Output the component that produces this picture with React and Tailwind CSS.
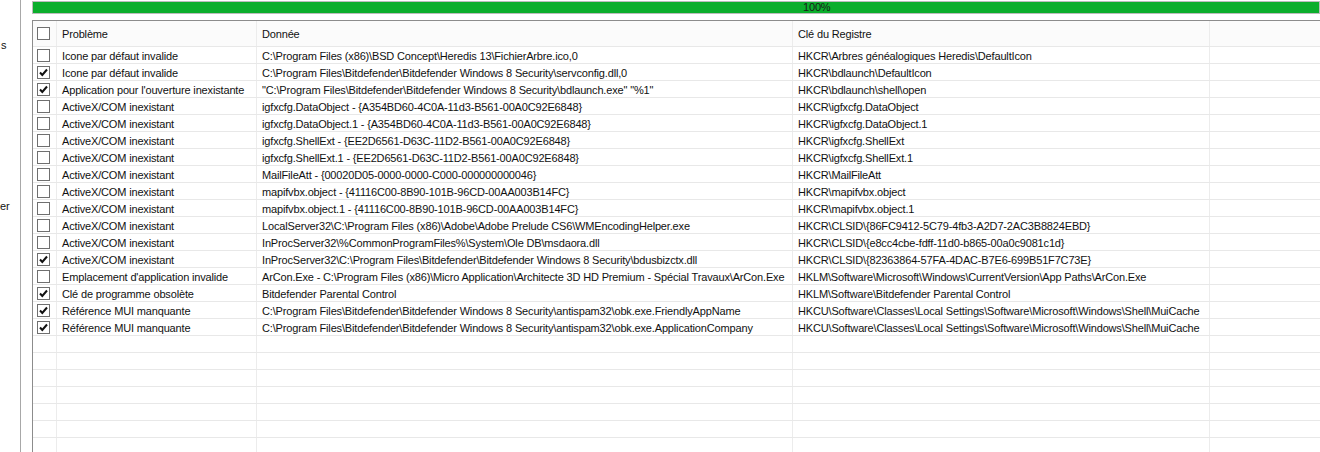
import React from "react";

const rows = [
  [false, "Icone par défaut invalide", "C:\\Program Files (x86)\\BSD Concept\\Heredis 13\\FichierArbre.ico,0", "HKCR\\Arbres généalogiques Heredis\\DefaultIcon"],
  [true, "Icone par défaut invalide", "C:\\Program Files\\Bitdefender\\Bitdefender Windows 8 Security\\servconfig.dll,0", "HKCR\\bdlaunch\\DefaultIcon"],
  [true, "Application pour l'ouverture inexistante", "\"C:\\Program Files\\Bitdefender\\Bitdefender Windows 8 Security\\bdlaunch.exe\" \"%1\"", "HKCR\\bdlaunch\\shell\\open"],
  [false, "ActiveX/COM inexistant", "igfxcfg.DataObject - {A354BD60-4C0A-11d3-B561-00A0C92E6848}", "HKCR\\igfxcfg.DataObject"],
  [false, "ActiveX/COM inexistant", "igfxcfg.DataObject.1 - {A354BD60-4C0A-11d3-B561-00A0C92E6848}", "HKCR\\igfxcfg.DataObject.1"],
  [false, "ActiveX/COM inexistant", "igfxcfg.ShellExt - {EE2D6561-D63C-11D2-B561-00A0C92E6848}", "HKCR\\igfxcfg.ShellExt"],
  [false, "ActiveX/COM inexistant", "igfxcfg.ShellExt.1 - {EE2D6561-D63C-11D2-B561-00A0C92E6848}", "HKCR\\igfxcfg.ShellExt.1"],
  [false, "ActiveX/COM inexistant", "MailFileAtt - {00020D05-0000-0000-C000-000000000046}", "HKCR\\MailFileAtt"],
  [false, "ActiveX/COM inexistant", "mapifvbx.object - {41116C00-8B90-101B-96CD-00AA003B14FC}", "HKCR\\mapifvbx.object"],
  [false, "ActiveX/COM inexistant", "mapifvbx.object.1 - {41116C00-8B90-101B-96CD-00AA003B14FC}", "HKCR\\mapifvbx.object.1"],
  [false, "ActiveX/COM inexistant", "LocalServer32\\C:\\Program Files (x86)\\Adobe\\Adobe Prelude CS6\\WMEncodingHelper.exe", "HKCR\\CLSID\\{86FC9412-5C79-4fb3-A2D7-2AC3B8824EBD}"],
  [false, "ActiveX/COM inexistant", "InProcServer32\\%CommonProgramFiles%\\System\\Ole DB\\msdaora.dll", "HKCR\\CLSID\\{e8cc4cbe-fdff-11d0-b865-00a0c9081c1d}"],
  [true, "ActiveX/COM inexistant", "InProcServer32\\C:\\Program Files\\Bitdefender\\Bitdefender Windows 8 Security\\bdusbizctx.dll", "HKCR\\CLSID\\{82363864-57FA-4DAC-B7E6-699B51F7C73E}"],
  [false, "Emplacement d'application invalide", "ArCon.Exe - C:\\Program Files (x86)\\Micro Application\\Architecte 3D HD Premium - Spécial Travaux\\ArCon.Exe", "HKLM\\Software\\Microsoft\\Windows\\CurrentVersion\\App Paths\\ArCon.Exe"],
  [true, "Clé de programme obsolète", "Bitdefender Parental Control", "HKLM\\Software\\Bitdefender Parental Control"],
  [true, "Référence MUI manquante", "C:\\Program Files\\Bitdefender\\Bitdefender Windows 8 Security\\antispam32\\obk.exe.FriendlyAppName", "HKCU\\Software\\Classes\\Local Settings\\Software\\Microsoft\\Windows\\Shell\\MuiCache"],
  [true, "Référence MUI manquante", "C:\\Program Files\\Bitdefender\\Bitdefender Windows 8 Security\\antispam32\\obk.exe.ApplicationCompany", "HKCU\\Software\\Classes\\Local Settings\\Software\\Microsoft\\Windows\\Shell\\MuiCache"],
];

function Check({ checked }) {
  return (
    <div className="ml-[4px] w-[13px] h-[13px] border border-[#6f6f6f] bg-white flex items-center justify-center">
      {checked && (
        <svg width="11" height="11" viewBox="0 0 11 11">
          <path d="M2 5.5 L4.3 8 L9 2.5" fill="none" stroke="#111" strokeWidth="2" />
        </svg>
      )}
    </div>
  );
}

function Row({ data, header }) {
  const [checked, a, b, c] = data;
  const h = header ? "h-[26px]" : "h-[17px]";
  const cell = "px-[5px] pt-[2px] whitespace-nowrap overflow-hidden border-r border-[#ececec] flex items-center";
  return (
    <div className={`flex ${h} border-b border-[#e8e8e8] ${header ? "bg-[#fbfbfb]" : ""}`}>
      <div className="w-[24px] shrink-0 border-r border-[#ececec] flex items-center">
        {checked !== null && <Check checked={checked} />}
      </div>
      <div className={`${cell} w-[200px] shrink-0`}>{a}</div>
      <div className={`${cell} w-[536px] shrink-0`}>{b}</div>
      <div className={`${cell} w-[417px] shrink-0`}>{c}</div>
      <div className="flex-1" />
    </div>
  );
}

export default function App() {
  return (
    <div
      className="w-[1320px] h-[452px] overflow-hidden bg-white flex text-[11px] text-[#111] tracking-[-0.16px]"
      style={{ fontFamily: '"Liberation Sans", Arial, sans-serif' }}
    >
      <div className="w-[21px] shrink-0 border-r border-[#a8a8a8] flex flex-col items-start">
        <div className="mt-[38px] leading-[14px] pl-[1px]">s</div>
        <div className="mt-[147px] leading-[14px]">er</div>
      </div>
      <div className="w-[11px] shrink-0" />
      <div className="flex-1 flex flex-col min-w-0">
        <div className="mt-[1px] h-[15px] border border-[#bcbcbc] bg-[#0bae2c] flex items-center pl-[770px] text-[11px] text-[#1a1a1a] leading-none">
          100%
        </div>
        <div className="mt-[6px] border-t border-l border-[#8c8c8c] flex-1">
          <Row header data={[false, "Problème", "Donnée", "Clé du Registre"]} />
          {rows.map((r, i) => (
            <Row key={i} data={r} />
          ))}
          {Array.from({ length: 7 }).map((_, i) => (
            <Row key={"e" + i} data={[null, "", "", ""]} />
          ))}
        </div>
      </div>
    </div>
  );
}
